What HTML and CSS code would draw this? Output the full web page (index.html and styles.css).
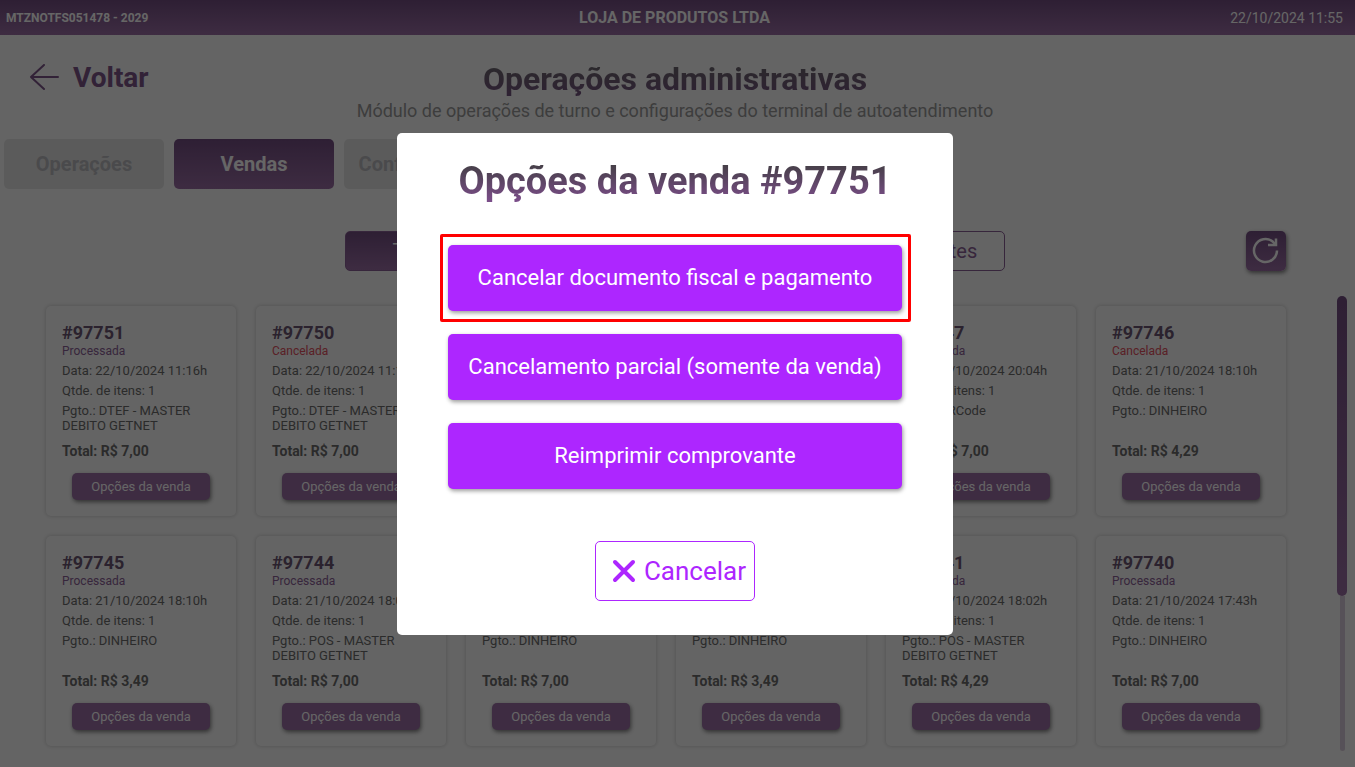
FILE: index.html
```html
<!DOCTYPE html>
<html lang="pt-BR">
<head>
    <meta charset="UTF-8">
    <meta name="viewport" content="width=device-width, initial-scale=1.0">
    <title>Operações administrativas</title>
    <link rel="stylesheet" href="styles.css">
</head>
<body>
    <header class="top-bar">
        <span class="terminal">MTZNOTFS051478 - 2029</span>
        <span class="store">LOJA DE PRODUTOS LTDA</span>
        <span class="clock">22/10/2024 11:55</span>
    </header>

    <main class="page">
        <div class="page-head">
            <button class="back-button">
                <svg width="30" height="28" viewBox="0 0 30 28" fill="none" stroke="currentColor" stroke-width="2" stroke-linecap="round" stroke-linejoin="round">
                    <path d="M15 1L2 13L15 25M2 13H29"/>
                </svg>
                Voltar
            </button>
            <div class="page-title">
                <h1>Operações administrativas</h1>
                <p>Módulo de operações de turno e configurações do terminal de autoatendimento</p>
            </div>
        </div>

        <nav class="tabs">
            <button class="tab">Operações</button>
            <button class="tab active">Vendas</button>
            <button class="tab">Configurações</button>
        </nav>

        <div class="filter-bar">
            <div class="filters">
                <button class="filter active">Todas</button>
                <button class="filter">Processadas</button>
                <button class="filter">Canceladas</button>
                <button class="filter">Pendentes</button>
            </div>
            <button class="refresh-button" aria-label="Atualizar">
                <svg width="28" height="28" viewBox="0 0 28 28" fill="none" stroke="currentColor" stroke-width="2.500">
                    <path d="M25 13.500A11.500 11.500 0 1 1 21 4.800L23.500 7.500"/>
                    <path d="M24 1.500V8H16"/>
                </svg>
            </button>
        </div>

        <div class="sales">
            <div class="sales-list">
                <div class="sale">
                    <h2>#97751</h2>
                    <p class="status">Processada</p>
                    <p>Data: 22/10/2024 11:16h</p>
                    <p>Qtde. de itens: 1</p>
                    <p class="payment">Pgto.: DTEF - MASTER DEBITO GETNET</p>
                    <p class="total">Total: R$ 7,00</p>
                    <button class="sale-button">Opções da venda</button>
                </div>
                <div class="sale">
                    <h2>#97750</h2>
                    <p class="status canceled">Cancelada</p>
                    <p>Data: 22/10/2024 11:12h</p>
                    <p>Qtde. de itens: 1</p>
                    <p class="payment">Pgto.: DTEF - MASTER DEBITO GETNET</p>
                    <p class="total">Total: R$ 7,00</p>
                    <button class="sale-button">Opções da venda</button>
                </div>
                <div class="sale">
                    <h2>#97749</h2>
                    <p class="status">Processada</p>
                    <p>Data: 21/10/2024 20:10h</p>
                    <p>Qtde. de itens: 1</p>
                    <p class="payment">Pgto.: DINHEIRO</p>
                    <p class="total">Total: R$ 7,00</p>
                    <button class="sale-button">Opções da venda</button>
                </div>
                <div class="sale">
                    <h2>#97748</h2>
                    <p class="status">Processada</p>
                    <p>Data: 21/10/2024 20:07h</p>
                    <p>Qtde. de itens: 1</p>
                    <p class="payment">Pgto.: DINHEIRO</p>
                    <p class="total">Total: R$ 7,00</p>
                    <button class="sale-button">Opções da venda</button>
                </div>
                <div class="sale">
                    <h2>#97747</h2>
                    <p class="status">Processada</p>
                    <p>Data: 21/10/2024 20:04h</p>
                    <p>Qtde. de itens: 1</p>
                    <p class="payment">Pgto.: QRCode</p>
                    <p class="total">Total: R$ 7,00</p>
                    <button class="sale-button">Opções da venda</button>
                </div>
                <div class="sale">
                    <h2>#97746</h2>
                    <p class="status canceled">Cancelada</p>
                    <p>Data: 21/10/2024 18:10h</p>
                    <p>Qtde. de itens: 1</p>
                    <p class="payment">Pgto.: DINHEIRO</p>
                    <p class="total">Total: R$ 4,29</p>
                    <button class="sale-button">Opções da venda</button>
                </div>
                <div class="sale">
                    <h2>#97745</h2>
                    <p class="status">Processada</p>
                    <p>Data: 21/10/2024 18:10h</p>
                    <p>Qtde. de itens: 1</p>
                    <p class="payment">Pgto.: DINHEIRO</p>
                    <p class="total">Total: R$ 3,49</p>
                    <button class="sale-button">Opções da venda</button>
                </div>
                <div class="sale">
                    <h2>#97744</h2>
                    <p class="status">Processada</p>
                    <p>Data: 21/10/2024 18:09h</p>
                    <p>Qtde. de itens: 1</p>
                    <p class="payment">Pgto.: POS - MASTER DEBITO GETNET</p>
                    <p class="total">Total: R$ 7,00</p>
                    <button class="sale-button">Opções da venda</button>
                </div>
                <div class="sale">
                    <h2>#97743</h2>
                    <p class="status">Processada</p>
                    <p>Data: 21/10/2024 18:07h</p>
                    <p>Qtde. de itens: 1</p>
                    <p class="payment">Pgto.: DINHEIRO</p>
                    <p class="total">Total: R$ 7,00</p>
                    <button class="sale-button">Opções da venda</button>
                </div>
                <div class="sale">
                    <h2>#97742</h2>
                    <p class="status">Processada</p>
                    <p>Data: 21/10/2024 18:05h</p>
                    <p>Qtde. de itens: 1</p>
                    <p class="payment">Pgto.: DINHEIRO</p>
                    <p class="total">Total: R$ 3,49</p>
                    <button class="sale-button">Opções da venda</button>
                </div>
                <div class="sale">
                    <h2>#97741</h2>
                    <p class="status">Processada</p>
                    <p>Data: 21/10/2024 18:02h</p>
                    <p>Qtde. de itens: 1</p>
                    <p class="payment">Pgto.: POS - MASTER DEBITO GETNET</p>
                    <p class="total">Total: R$ 4,29</p>
                    <button class="sale-button">Opções da venda</button>
                </div>
                <div class="sale">
                    <h2>#97740</h2>
                    <p class="status">Processada</p>
                    <p>Data: 21/10/2024 17:43h</p>
                    <p>Qtde. de itens: 1</p>
                    <p class="payment">Pgto.: DINHEIRO</p>
                    <p class="total">Total: R$ 7,00</p>
                    <button class="sale-button">Opções da venda</button>
                </div>
            </div>
            <div class="scroll">
                <div class="scroll-thumb"></div>
                <div class="scroll-track"></div>
            </div>
        </div>
    </main>

    <div class="overlay">
        <div class="modal" role="dialog" aria-labelledby="modal-title">
            <h2 id="modal-title" class="modal-title">Opções da venda #97751</h2>
            <div class="modal-options">
                <div class="highlight">
                    <button class="option">Cancelar documento fiscal e pagamento</button>
                </div>
                <button class="option">Cancelamento parcial (somente da venda)</button>
                <button class="option">Reimprimir comprovante</button>
            </div>
            <button class="cancel-button">
                <svg width="24" height="24" viewBox="0 0 24 24" fill="none" stroke="currentColor" stroke-width="4" stroke-linecap="round">
                    <path d="M3 3L21 21M21 3L3 21"/>
                </svg>
                Cancelar
            </button>
        </div>
    </div>
</body>
</html>
```
FILE: styles.css
```css
* {
    box-sizing: border-box;
}
body {
    display: flex;
    flex-direction: column;
    height: 100vh;
    margin: 0;
    overflow: hidden;
    background-color: #fafafa;
    color: #6c6c6c;
    font-family: Roboto, "Liberation Sans", sans-serif;
}
h1, h2, p {
    margin: 0;
}
button {
    padding: 0;
    border: none;
    border-radius: 5px;
    font-family: inherit;
    cursor: pointer;
}
.top-bar {
    display: grid;
    grid-template-columns: 1fr auto 1fr;
    align-items: center;
    height: 35px;
    padding: 0 12px 0 6px;
    background: linear-gradient(#734e82, #9b6ea5);
    color: white;
}
.terminal {
    font-size: 12px;
    font-weight: bold;
}
.store {
    font-size: 16px;
    font-weight: bold;
}
.clock {
    font-size: 14px;
    text-align: right;
}
.page {
    display: flex;
    flex-direction: column;
    flex: 1;
    min-height: 0;
    padding-bottom: 16px;
}
.page-head {
    display: grid;
    grid-template-columns: 1fr auto 1fr;
    align-items: start;
    padding: 25px 5px 0 0;
}
.back-button {
    display: flex;
    align-items: center;
    justify-self: start;
    gap: 14px;
    margin-left: 29px;
    background: none;
    color: #7d5589;
    font-size: 28px;
    font-weight: bold;
    line-height: 36px;
}
.page-title {
    text-align: center;
}
.page-title h1 {
    background: linear-gradient(#6a6a6a, #755281);
    background-clip: text;
    color: transparent;
    font-size: 32px;
    line-height: 38px;
}
.page-title p {
    color: #999;
    font-size: 18px;
    line-height: 26px;
}
.tabs {
    display: flex;
    gap: 10px;
    padding: 15px 4px 0;
}
.tab {
    width: 160px;
    height: 50px;
    background-color: #e4e4e4;
    color: #b9b9bd;
    font-size: 20px;
    font-weight: bold;
}
.tab.active, .filter.active {
    background: linear-gradient(#734e82, #9b6ea5);
    color: white;
}
.filter-bar {
    display: grid;
    grid-template-columns: 1fr auto 1fr;
    padding: 42px 69px 0 64px;
}
.filters {
    display: flex;
    grid-column: 2;
    gap: 20px;
}
.filter {
    width: 150px;
    height: 40px;
    border: 1px solid #8b6096;
    background: none;
    color: #8b6096;
    font-size: 20px;
}
.refresh-button {
    display: flex;
    align-items: center;
    justify-content: center;
    justify-self: end;
    width: 40px;
    height: 40px;
    background: linear-gradient(#734e82, #9b6ea5);
    box-shadow: 1px 2px 4px rgba(0, 0, 0, 0.5);
    color: white;
}
.sales {
    display: flex;
    flex: 1;
    min-height: 0;
    padding: 25px 8px 0 46px;
}
.sales-list {
    display: grid;
    grid-template-columns: repeat(auto-fill, 190px);
    align-content: start;
    flex: 1;
    gap: 20px;
    padding-top: 10px;
}
.sale {
    display: flex;
    flex-direction: column;
    height: 210px;
    padding: 16px;
    border-radius: 5px;
    box-shadow: 0 0 4px rgba(0, 0, 0, 0.2);
    font-size: 13px;
    line-height: 15px;
}
.sale h2 {
    color: #6b5673;
    font-size: 18px;
    line-height: 22px;
}
.sale p {
    margin-bottom: 5px;
}
.sale .status {
    margin-bottom: 4px;
    color: #8b6096;
    font-size: 12px;
}
.sale .canceled {
    color: #e05060;
}
.sale .payment {
    height: 30px;
    margin-bottom: 11px;
}
.sale .total {
    font-size: 14px;
    font-weight: bold;
}
.sale-button {
    align-self: center;
    width: 138px;
    height: 27px;
    margin-top: auto;
    background-color: #9b6ea5;
    box-shadow: 1px 2px 4px rgba(0, 0, 0, 0.5);
    color: white;
    font-size: 13px;
}
.scroll {
    display: flex;
    flex-direction: column;
    align-items: center;
    width: 10px;
}
.scroll-thumb {
    width: 10px;
    height: 300px;
    border-radius: 5px;
    background: linear-gradient(#734e82, #9b6ea5);
}
.scroll-track {
    flex: 1;
    width: 5px;
    border-radius: 0 0 3px 3px;
    background-color: #d8cadb;
}
.overlay {
    position: fixed;
    inset: 0;
    display: flex;
    align-items: center;
    justify-content: center;
    padding-right: 5px;
    background-color: rgba(0, 0, 0, 0.6);
}
.modal {
    display: flex;
    flex-direction: column;
    align-items: center;
    width: 556px;
    padding: 26px 51px 34px;
    border-radius: 5px;
    background-color: white;
}
.modal-title {
    background: linear-gradient(#3d3d3d, #7d4e8c);
    background-clip: text;
    color: transparent;
    font-size: 38px;
    line-height: 44px;
}
.modal-options {
    display: flex;
    flex-direction: column;
    align-self: stretch;
    gap: 23px;
    margin: 42px 0 52px;
}
.highlight {
    position: relative;
}
/* moldura vermelha em volta da primeira opção */
.highlight::after {
    content: "";
    position: absolute;
    inset: -11px -9px -11px -8px;
    border: 3px solid red;
    border-radius: 2px;
    pointer-events: none;
}
.option {
    width: 100%;
    height: 66px;
    background-color: #ad26ff;
    box-shadow: 1px 2px 4px rgba(0, 0, 0, 0.4);
    color: white;
    font-size: 22px;
}
.cancel-button {
    display: flex;
    align-items: center;
    justify-content: center;
    gap: 8px;
    width: 160px;
    height: 60px;
    padding-left: 8px;
    border: 1px solid #ad26ff;
    background: none;
    color: #ad26ff;
    font-size: 26px;
}
```
